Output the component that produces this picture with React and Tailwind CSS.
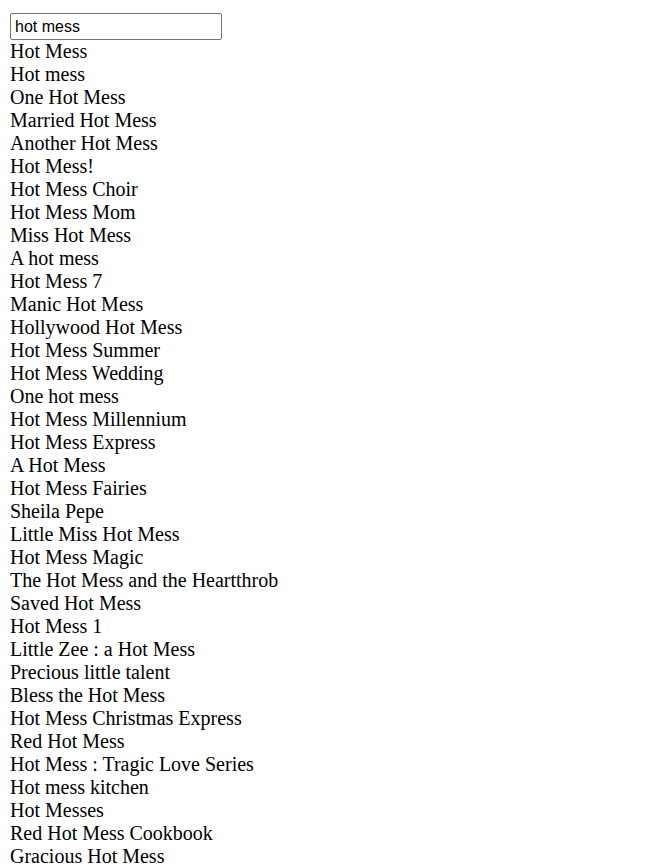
import React, { useState } from 'react';

const titles = [
  'Hot Mess',
  'Hot mess',
  'One Hot Mess',
  'Married Hot Mess',
  'Another Hot Mess',
  'Hot Mess!',
  'Hot Mess Choir',
  'Hot Mess Mom',
  'Miss Hot Mess',
  'A hot mess',
  'Hot Mess 7',
  'Manic Hot Mess',
  'Hollywood Hot Mess',
  'Hot Mess Summer',
  'Hot Mess Wedding',
  'One hot mess',
  'Hot Mess Millennium',
  'Hot Mess Express',
  'A Hot Mess',
  'Hot Mess Fairies',
  'Sheila Pepe',
  'Little Miss Hot Mess',
  'Hot Mess Magic',
  'The Hot Mess and the Heartthrob',
  'Saved Hot Mess',
  'Hot Mess 1',
  'Little Zee : a Hot Mess',
  'Precious little talent',
  'Bless the Hot Mess',
  'Hot Mess Christmas Express',
  'Red Hot Mess',
  'Hot Mess : Tragic Love Series',
  'Hot mess kitchen',
  'Hot Messes',
  'Red Hot Mess Cookbook',
  'Gracious Hot Mess',
  'Hot Mess Holiday',
  'Hot Mess Heart',
];

const App = () => {
  const [query, setQuery] = useState('hot mess');

  return (
    <div className="px-[10px] pt-[13px] font-['Liberation_Serif',serif] text-[20px] leading-[23px] text-black bg-white">
      <input
        type="text"
        value={query}
        onChange={(e) => setQuery(e.target.value)}
        className="block w-[212px] h-[27px] px-[4px] border border-[#767676] rounded-[2px] font-['Liberation_Sans',Arial,sans-serif] text-[16px] leading-[19px] text-black outline-none"
      />
      <div>
        {titles.map((title, i) => (
          <div key={i}>{title}</div>
        ))}
      </div>
    </div>
  );
};

export default App;
